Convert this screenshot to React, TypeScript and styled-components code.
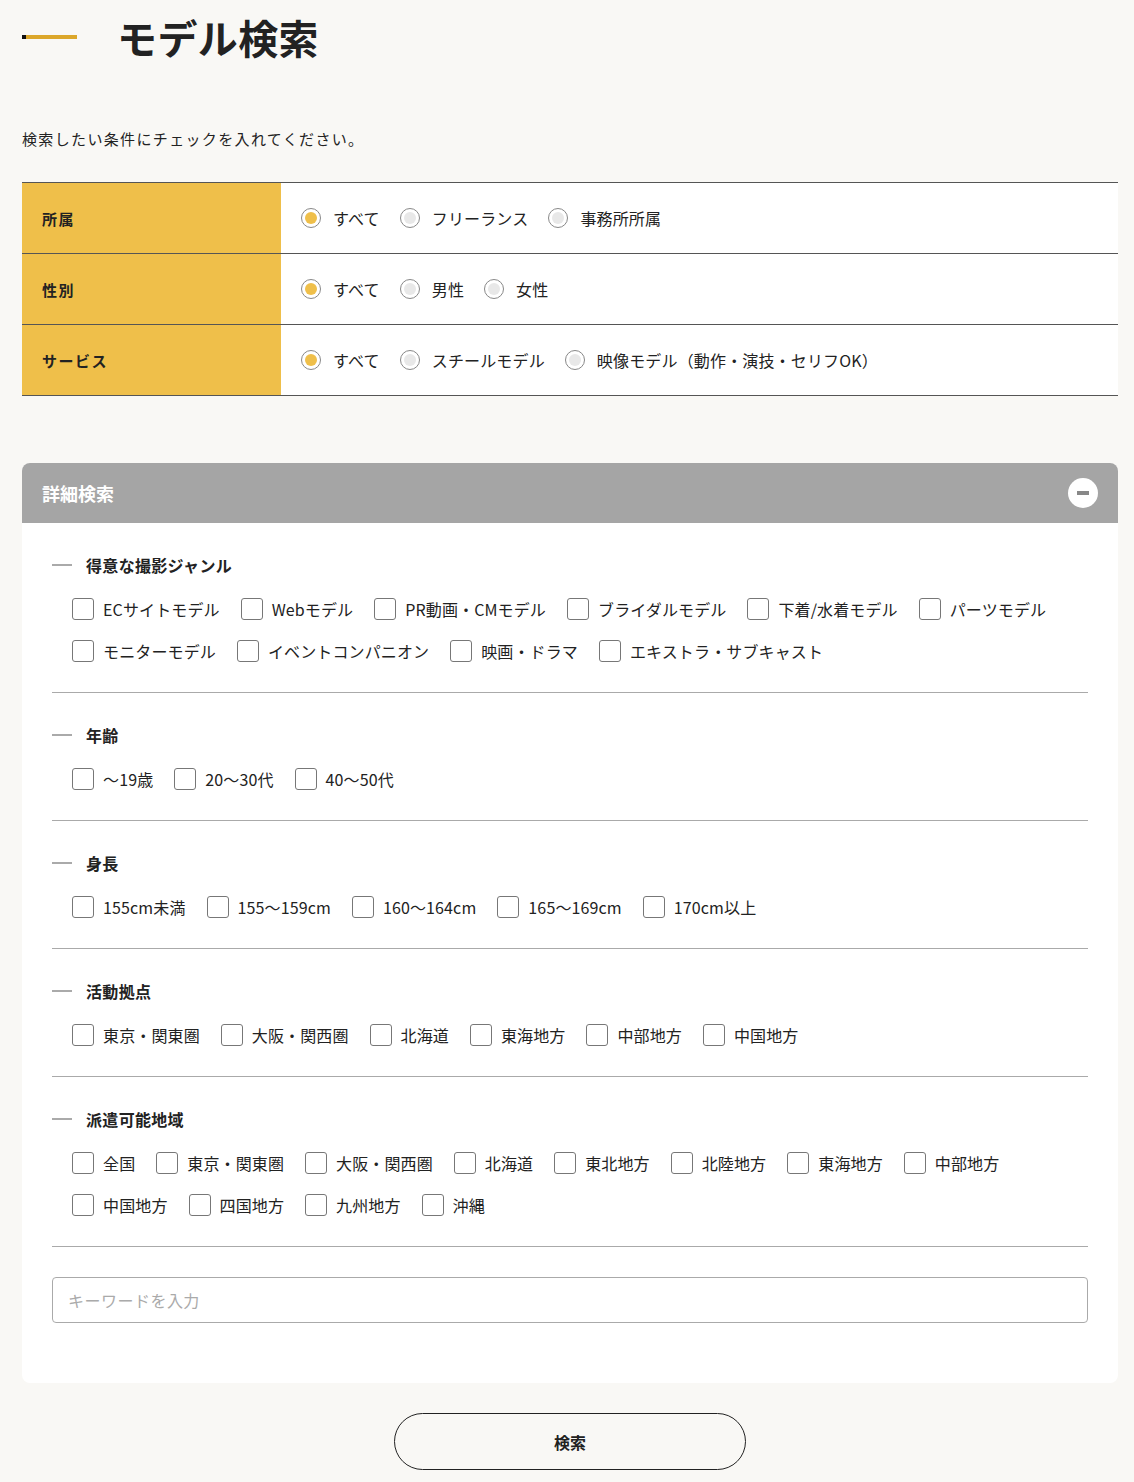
import React, { useState } from "react";
import styled, { createGlobalStyle } from "styled-components";

const GlobalStyle = createGlobalStyle`
  body {
    margin: 0;
    background: #f9f8f5;
    color: #222;
    font-family: "Noto Sans CJK JP", "Noto Sans", sans-serif;
  }
  * {
    box-sizing: border-box;
  }
`;

const StyledPage = styled.main`
  padding: 0 16px 13px 22px;
`;

const StyledTitle = styled.h1`
  display: flex;
  align-items: center;
  gap: 40px;
  margin: 0;
  height: 74px;
  font-size: 40px;
  font-weight: 700;
  letter-spacing: 0.01em;

  &:before {
    content: "";
    display: block;
    width: 55px;
    height: 4px;
    background: linear-gradient(to right, #111 0 4px, #dca72a 4px);
  }
`;

const Intro = styled.p`
  margin: 54px 0 32px;
  font-size: 15px;
  line-height: 22px;
  letter-spacing: 0.09em;
`;

const Table = styled.div`
  border-top: 1px solid #555;
`;

const Row = styled.div`
  display: grid;
  grid-template-columns: 259px 1fr;
  height: 71px;
  border-bottom: 1px solid #555;
`;

const Label = styled.div`
  display: flex;
  align-items: center;
  padding-left: 20px;
  background: #efbf4a;
  font-size: 15px;
  font-weight: 700;
  letter-spacing: 0.1em;
`;

const RadioCell = styled.div`
  display: flex;
  align-items: center;
  gap: 20px;
  padding-left: 20px;
  background: #fff;
`;

const RadioItem = styled.label`
  display: flex;
  align-items: center;
  gap: 12px;
  font-size: 16px;
  letter-spacing: 0.01em;
  cursor: pointer;
`;

const RadioMark = styled.span<{ $on: boolean }>`
  width: 20px;
  height: 20px;
  border-radius: 50%;
  border: 1px solid #888;
  background: #fff;
  display: flex;
  align-items: center;
  justify-content: center;

  &:after {
    content: "";
    width: 12px;
    height: 12px;
    border-radius: 50%;
    background: ${(p) => (p.$on ? "#efbf4a" : "#e8e8e8")};
  }
`;

const Panel = styled.section`
  margin-top: 67px;
  background: #fff;
  border-radius: 8px;
  overflow: hidden;
`;

const PanelHeader = styled.div`
  display: flex;
  align-items: center;
  justify-content: space-between;
  height: 60px;
  padding: 0 20px;
  background: #a5a5a5;
  color: #fff;
  font-size: 18px;
  font-weight: 700;
`;

const ToggleButton = styled.button`
  width: 30px;
  height: 30px;
  border-radius: 50%;
  border: none;
  background: #fff;
  display: flex;
  align-items: center;
  justify-content: center;
  padding: 0;
  cursor: pointer;

  &:after {
    content: "";
    width: 12px;
    height: 4px;
    background: #888;
  }
`;

const PanelBody = styled.div`
  padding: 0 30px 60px;
`;

const Group = styled.div`
  padding: 32px 0 26px;
  border-bottom: 1px solid #aaa;
`;

const GroupTitle = styled.h3`
  display: flex;
  align-items: center;
  gap: 14px;
  margin: 0 0 19px;
  font-size: 16px;
  line-height: 20px;
  font-weight: 700;
  letter-spacing: 0.02em;

  &:before {
    content: "";
    width: 20px;
    height: 2px;
    background: #aaa;
  }
`;

const CheckList = styled.div`
  display: flex;
  flex-wrap: wrap;
  gap: 12px 21px;
  padding-left: 20px;
`;

const CheckItem = styled.label`
  display: flex;
  align-items: center;
  gap: 9px;
  height: 30px;
  font-size: 16px;
  letter-spacing: 0.008em;
  cursor: pointer;
`;

const CheckBox = styled.span<{ $on: boolean }>`
  width: 22px;
  height: 22px;
  border: 1px solid #777;
  border-radius: 3px;
  background: ${(p) => (p.$on ? "#efbf4a" : "#fff")};
`;

const Keyword = styled.input`
  display: block;
  width: 100%;
  height: 46px;
  margin-top: 30px;
  padding: 0 15px;
  border: 1px solid #aaa;
  border-radius: 4px;
  font-family: inherit;
  font-size: 16px;
  letter-spacing: 0.03em;
  color: #222;
  outline: none;

  &::placeholder {
    color: #aaa;
  }
`;

const SubmitButton = styled.button`
  display: block;
  width: 352px;
  height: 57px;
  margin: 30px auto 0;
  border: 1px solid #222;
  border-radius: 999px;
  background: transparent;
  font-family: inherit;
  font-size: 16px;
  font-weight: 700;
  color: #222;
  cursor: pointer;
`;

const radios = [
  { label: "所属", options: ["すべて", "フリーランス", "事務所所属"] },
  { label: "性別", options: ["すべて", "男性", "女性"] },
  {
    label: "サービス",
    options: ["すべて", "スチールモデル", "映像モデル（動作・演技・セリフOK）"],
  },
];

const groups = [
  {
    title: "得意な撮影ジャンル",
    items: [
      "ECサイトモデル",
      "Webモデル",
      "PR動画・CMモデル",
      "ブライダルモデル",
      "下着/水着モデル",
      "パーツモデル",
      "モニターモデル",
      "イベントコンパニオン",
      "映画・ドラマ",
      "エキストラ・サブキャスト",
    ],
  },
  { title: "年齢", items: ["〜19歳", "20〜30代", "40〜50代"] },
  {
    title: "身長",
    items: ["155cm未満", "155〜159cm", "160〜164cm", "165〜169cm", "170cm以上"],
  },
  {
    title: "活動拠点",
    items: ["東京・関東圏", "大阪・関西圏", "北海道", "東海地方", "中部地方", "中国地方"],
  },
  {
    title: "派遣可能地域",
    items: [
      "全国",
      "東京・関東圏",
      "大阪・関西圏",
      "北海道",
      "東北地方",
      "北陸地方",
      "東海地方",
      "中部地方",
      "中国地方",
      "四国地方",
      "九州地方",
      "沖縄",
    ],
  },
];

const App: React.FC = () => {
  const [picked, setPicked] = useState<number[]>([0, 0, 0]);
  const [checked, setChecked] = useState<Record<string, boolean>>({});
  const [open, setOpen] = useState(true);

  const toggle = (key: string) =>
    setChecked((prev) => ({ ...prev, [key]: !prev[key] }));

  return (
    <StyledPage>
      <GlobalStyle />
      <StyledTitle>モデル検索</StyledTitle>
      <Intro>検索したい条件にチェックを入れてください。</Intro>

      <Table>
        {radios.map((row, r) => (
          <Row key={row.label}>
            <Label>{row.label}</Label>
            <RadioCell>
              {row.options.map((opt, i) => (
                <RadioItem
                  key={opt}
                  onClick={() =>
                    setPicked((prev) => prev.map((v, j) => (j === r ? i : v)))
                  }
                >
                  <RadioMark $on={picked[r] === i} />
                  {opt}
                </RadioItem>
              ))}
            </RadioCell>
          </Row>
        ))}
      </Table>

      <Panel>
        <PanelHeader>
          詳細検索
          <ToggleButton aria-label="閉じる" onClick={() => setOpen(!open)} />
        </PanelHeader>
        {open && (
          <PanelBody>
            {groups.map((group) => (
              <Group key={group.title}>
                <GroupTitle>{group.title}</GroupTitle>
                <CheckList>
                  {group.items.map((item) => {
                    const key = group.title + item;
                    return (
                      <CheckItem key={key} onClick={() => toggle(key)}>
                        <CheckBox $on={!!checked[key]} />
                        {item}
                      </CheckItem>
                    );
                  })}
                </CheckList>
              </Group>
            ))}
            <Keyword placeholder="キーワードを入力" />
          </PanelBody>
        )}
      </Panel>

      <SubmitButton>検索</SubmitButton>
    </StyledPage>
  );
};

export default App;
